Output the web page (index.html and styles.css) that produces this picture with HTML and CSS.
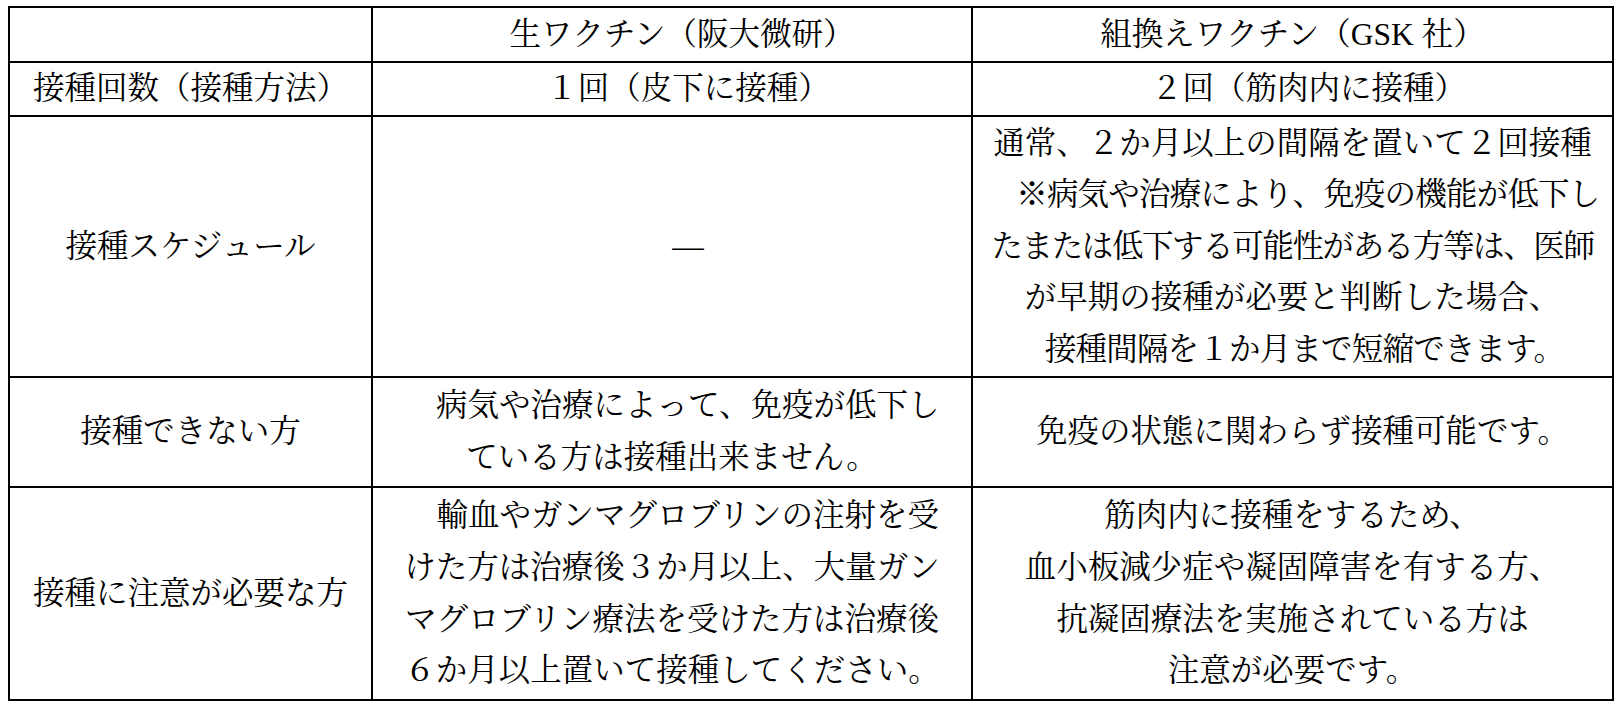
FILE: index.html
```html
<!DOCTYPE html>
<html lang="ja">
<head>
<meta charset="utf-8">
<title>ワクチン比較</title>
<link rel="stylesheet" href="styles.css">
</head>
<body>
<table class="cmp">
  <colgroup>
    <col class="c1">
    <col class="c2">
    <col class="c3">
  </colgroup>
  <tr class="r1">
    <td></td>
    <td class="shift-s">生ワクチン（阪大微研）</td>
    <td>組換えワクチン（GSK 社）</td>
  </tr>
  <tr class="r2">
    <td>接種回数（接種方法）</td>
    <td class="shift-m">１回（皮下に接種）</td>
    <td class="shift-m">２回（筋肉内に接種）</td>
  </tr>
  <tr class="r3">
    <td>接種スケジュール</td>
    <td class="shift-m">―</td>
    <td><span class="line">通常、２か月以上の間隔を置いて２回接種</span><br><span class="line tight-1">　※病気や治療により、免疫の機能が低下し</span><br><span class="line tight-2">たまたは低下する可能性がある方等は、医師</span><br><span class="line">が早期の接種が必要と判断した場合、</span><br><span class="line tight-1 nudge">接種間隔を１か月まで短縮できます。</span></td>
  </tr>
  <tr class="r4">
    <td>接種できない方</td>
    <td>　病気や治療によって、免疫が低下し<br>ている方は接種出来ません。</td>
    <td class="shift-s">免疫の状態に関わらず接種可能です。</td>
  </tr>
  <tr class="r5">
    <td>接種に注意が必要な方</td>
    <td>　輸血やガンマグロブリンの注射を受<br>けた方は治療後３か月以上、大量ガン<br>マグロブリン療法を受けた方は治療後<br>６か月以上置いて接種してください。</td>
    <td>筋肉内に接種をするため、<br>血小板減少症や凝固障害を有する方、<br>抗凝固療法を実施されている方は<br>注意が必要です。</td>
  </tr>
</table>
</body>
</html>
```

FILE: styles.css
```css
html, body {
  margin: 0;
  padding: 0;
  background: #ffffff;
}

body {
  font-family: "Liberation Serif", "Noto Serif CJK JP", "Noto Sans CJK JP", serif;
  color: #000000;
}

.cmp {
  margin: 6px 0 0 8px;
  border-collapse: separate;
  border-spacing: 0;
  table-layout: fixed;
  width: 1606px;
  border-top: 2px solid #000;
  border-left: 2px solid #000;
}

.c1 { width: 363px; }
.c2 { width: 600px; }
.c3 { width: 641px; }

.cmp td {
  box-sizing: border-box;
  border-right: 2px solid #000;
  border-bottom: 2px solid #000;
  padding: 0;
  text-align: center;
  vertical-align: middle;
  font-size: 31.5px;
  line-height: 51.6px;
  white-space: nowrap;
  overflow: visible;
}

.cmp td.shift-s { padding-left: 20px; }
.cmp td.shift-m { padding-left: 32px; }

.line { display: inline-block; }
.tight-1 { letter-spacing: -0.8px; }
.tight-2 { letter-spacing: -1.4px; }
.nudge { padding-left: 24px; }

.r1 td { height: 55px; }
.r2 td { height: 54px; }
.r3 td { height: 261px; }
.r4 td { height: 110px; }
.r5 td { height: 213px; }
```
